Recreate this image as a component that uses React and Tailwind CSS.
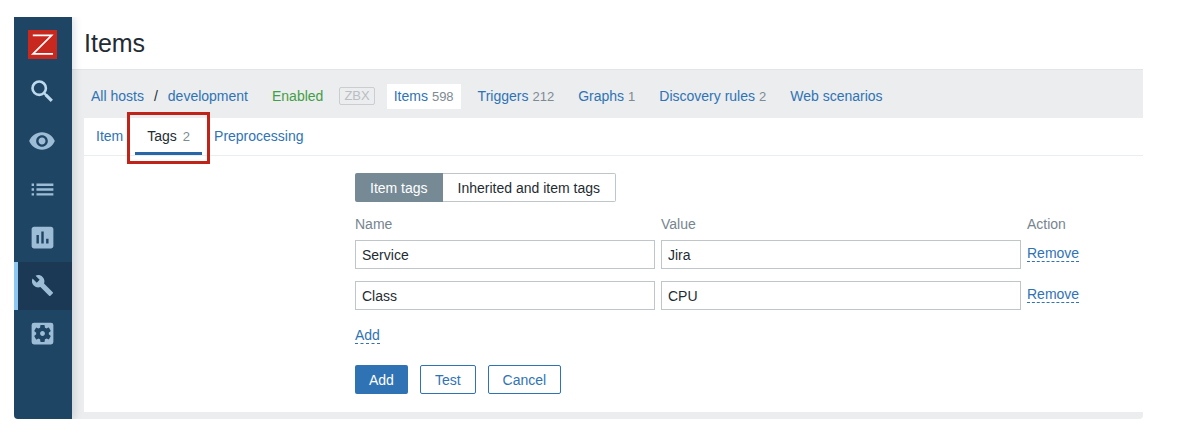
import React from "react";
import {
  MdVisibility,
  MdList,
  MdAssessment,
  MdBuild,
  MdSettingsApplications,
} from "react-icons/md";

const menu = [
  { label: "Monitoring", icon: <MdVisibility size={28} /> },
  { label: "Inventory", icon: <MdList size={29} /> },
  { label: "Reports", icon: <MdAssessment size={29} /> },
  { label: "Configuration", icon: <MdBuild size={23} />, active: true },
  { label: "Administration", icon: <MdSettingsApplications size={29} /> },
];

const hostLinks = [
  { label: "Items", count: 598, active: true },
  { label: "Triggers", count: 212 },
  { label: "Graphs", count: 1 },
  { label: "Discovery rules", count: 2 },
  { label: "Web scenarios" },
];

const tags = [
  { name: "Service", value: "Jira" },
  { name: "Class", value: "CPU" },
];

function Sidebar() {
  return (
    <nav
      aria-label="Main"
      className="z-10 flex w-[58px] shrink-0 flex-col bg-[#1f4565] text-[#9dbdd6] shadow-[2px_0_8px_rgba(40,50,90,0.16)]"
    >
      <a href="#home" aria-label="Home" className="mt-[13px] ml-[14px] block size-[29px] bg-[#c8281e]">
        <svg viewBox="0 0 29 29" className="size-full" fill="none" stroke="#fff" strokeWidth="1.7">
          <path d="M4.8 5.3H23.6L5 23.9H25" strokeLinejoin="miter" />
        </svg>
      </a>
      <button
        type="button"
        aria-label="Search"
        className="flex h-[59px] items-center justify-center pt-1 pr-[2px] text-[#bcd9ee]"
      >
        <svg viewBox="0 0 22 22" className="size-[22px]" fill="none" stroke="currentColor">
          <circle cx="8.2" cy="8.2" r="6.7" strokeWidth="2.6" />
          <path d="M13 13L15.4 15.4" strokeWidth="2.4" />
          <path d="M14.8 14.8L20.8 20.8" strokeWidth="3.2" />
        </svg>
      </button>
      {menu.map((m) => (
        <a
          key={m.label}
          href={"#" + m.label.toLowerCase()}
          aria-label={m.label}
          className={
            m.active
              ? "flex h-12 items-center justify-center border-l-4 border-[#8cc8f2] bg-[#1b3854] pr-[6px] pb-[2px]"
              : "flex h-12 items-center justify-center pr-[2px] pb-[2px]"
          }
        >
          {m.icon}
        </a>
      ))}
    </nav>
  );
}

function HostNav() {
  return (
    <div className="flex h-[49px] items-center border-t border-[#e2e5e7] pt-1 pl-[19px] whitespace-nowrap">
      <a href="#hosts" className="text-[#2f73b5]">All hosts</a>
      <span className="px-[10px]">/</span>
      <a href="#development" className="text-[#2f73b5]">development</a>
      <span className="ml-6 text-[#429e47]">Enabled</span>
      <span className="ml-4 rounded-xs border border-[#c9ced1] px-1 text-[13px] leading-4 text-[#b9bec2]">
        ZBX
      </span>
      <div className="ml-3 flex items-center gap-[10px]">
        {hostLinks.map((l) => (
          <a
            key={l.label}
            href={"#" + l.label.toLowerCase().replace(" ", "-")}
            className={
              l.active
                ? "bg-white px-[7px] leading-6 text-[#2f73b5]"
                : "px-[7px] leading-6 text-[#2f73b5]"
            }
          >
            {l.label}
            {l.count !== undefined && <span className="ml-1 text-[13px] text-[#7d8a93]">{l.count}</span>}
          </a>
        ))}
      </div>
    </div>
  );
}

function Tabs() {
  return (
    <div role="tablist" className="flex h-[38px] border-b border-[#ebeef0]">
      <button type="button" role="tab" aria-selected="false" className="px-3 pb-px text-[#2f73b5]">
        Item
      </button>
      <button
        type="button"
        role="tab"
        aria-selected="true"
        className="relative border-b-[3px] border-[#2866a8] px-3 pt-[3px]"
      >
        Tags<span className="ml-[6px] text-[13px] text-[#7d8a93]">2</span>
        <span className="pointer-events-none absolute -top-[6px] -right-2 -bottom-[12px] -left-2 border-[3px] border-[#c02418]" />
      </button>
      <button type="button" role="tab" aria-selected="false" className="px-3 pb-px text-[#2f73b5]">
        Preprocessing
      </button>
    </div>
  );
}

const dashed = "inline-block border-b border-dashed border-[#2f73b5] leading-4 text-[#2f73b5]";
const field = "block h-[29px] w-full border border-[#bfc6ca] bg-white px-[6px]";
const outline = "h-[29px] rounded-xs border border-[#2f73b5] px-[14px] text-[#2f73b5]";

function TagForm() {
  return (
    <form className="pt-[17px] pb-[18px] pl-[271px]" onSubmit={(e) => e.preventDefault()}>
      <div className="flex h-[29px]">
        <button type="button" className="rounded-l-xs bg-[#768a96] px-[15px] text-white">
          Item tags
        </button>
        <button type="button" className="rounded-r-xs border border-l-0 border-[#bfc6ca] px-[15px]">
          Inherited and item tags
        </button>
      </div>
      <table className="mt-[10px] w-full table-fixed text-left">
        <colgroup>
          <col className="w-[306px]" />
          <col className="w-[366px]" />
          <col />
        </colgroup>
        <thead>
          <tr className="h-6 leading-6 text-[#76858f]">
            <th className="font-normal">Name</th>
            <th className="font-normal">Value</th>
            <th className="font-normal">Action</th>
          </tr>
        </thead>
        <tbody>
          {tags.map((t) => (
            <tr key={t.name}>
              <td className="pt-1 pr-[6px] pb-2">
                <input aria-label="Name" defaultValue={t.name} className={field} />
              </td>
              <td className="pt-1 pr-[6px] pb-2">
                <input aria-label="Value" defaultValue={t.value} className={field} />
              </td>
              <td className="pb-2">
                <button type="button" className={dashed}>Remove</button>
              </td>
            </tr>
          ))}
        </tbody>
      </table>
      <div className="mt-[9px] flex">
        <button type="button" className={dashed}>Add</button>
      </div>
      <div className="mt-[21px] flex gap-3">
        <button type="submit" className="h-[29px] rounded-xs bg-[#2f73b5] px-[14px] text-white">
          Add
        </button>
        <button type="button" className={outline}>Test</button>
        <button type="button" className={outline}>Cancel</button>
      </div>
    </form>
  );
}

export default function App() {
  return (
    <div className="min-h-screen bg-white pt-[17px] pr-[34px] pb-[15px] pl-[14px] font-['Liberation_Sans',Arial,sans-serif] text-[14px] leading-5 text-[#1f2c33]">
      <div className="flex overflow-hidden rounded-b-sm">
        <Sidebar />
        <div className="min-w-0 flex-1 bg-[#ebedee]">
          <header className="flex h-[52px] items-center bg-white pl-3">
            <h1 className="text-[25px] leading-8">Items</h1>
          </header>
          <HostNav />
          <main className="mb-[7px] ml-3 bg-white">
            <Tabs />
            <TagForm />
          </main>
        </div>
      </div>
    </div>
  );
}
